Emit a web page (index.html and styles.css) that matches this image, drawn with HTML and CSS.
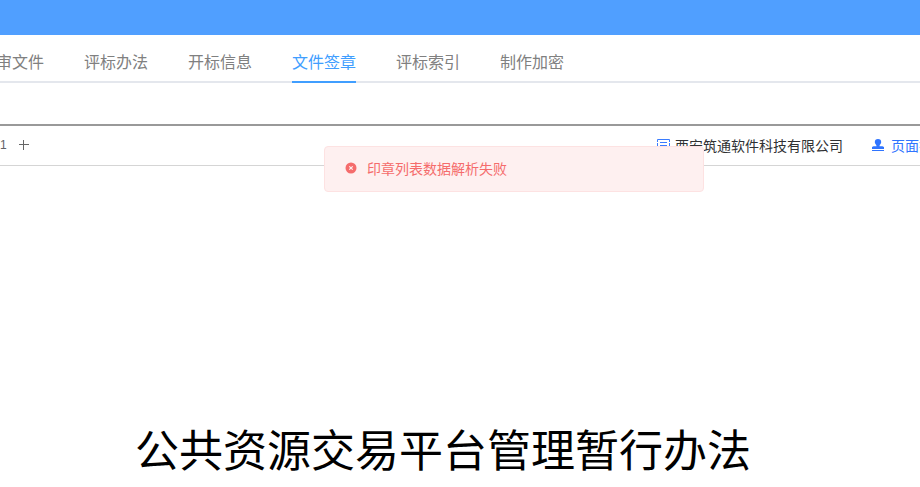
FILE: index.html
```html
<!DOCTYPE html>
<html lang="zh-CN">
<head>
<meta charset="utf-8">
<title>文件签章</title>
<link rel="stylesheet" href="styles.css">
</head>
<body>
<header class="topbar"></header>
<nav class="tabs">
  <a class="tab" href="#review">审文件</a>
  <a class="tab" href="#method">评标办法</a>
  <a class="tab" href="#opening">开标信息</a>
  <a class="tab active" href="#seal">文件签章</a>
  <a class="tab" href="#index">评标索引</a>
  <a class="tab" href="#encrypt">制作加密</a>
</nav>
<main class="viewer">
  <div class="toolbar">
    <div class="zoom">
      <span>1</span>
      <button class="plus" type="button" aria-label="放大"><svg width="12" height="12" viewBox="0 0 12 12"><path d="M1 5.5h10M5.5 1v10" stroke="#666" fill="none"/></svg></button>
    </div>
    <div class="actions">
      <span class="company">
        <svg width="14" height="14" viewBox="0 0 14 14" fill="none" stroke="#3a7cff"><path d="M1.500 4V1.500H13.500V4M1.500 11v1.500H13.500V11M1.500 5v4M13.500 5v4M4 4.500h7M4 7.500h7M4 10h4"/></svg>
        西安筑通软件科技有限公司
      </span>
      <button class="stamp" type="button">
        <svg width="14" height="14" viewBox="0 0 14 14" fill="#2f74ff"><path d="M7 1a3.200 3.200 0 0 1 3.200 3.200c0 1.500-1.700 2.200-1.700 4h3L13 9v2H1V9l1.500-.8h3c0-1.800-1.700-2.500-1.700-4A3.200 3.200 0 0 1 7 1zM1 12h12v1H1z"/></svg>
        页面操
      </button>
    </div>
  </div>
  <article class="page">
    <h1>公共资源交易平台管理暂行办法</h1>
  </article>
</main>
<div class="message" role="alert">
  <svg width="12" height="12" viewBox="0 0 12 12"><circle cx="6" cy="6" r="5.500" fill="#f56c6c"/><path d="M4.300 4.300l3.400 3.400M7.700 4.300L4.300 7.700" stroke="#fef0f0" stroke-width="1.200"/></svg>
  <p>印章列表数据解析失败</p>
</div>
</body>
</html>
```
FILE: styles.css
```css
* {
  box-sizing: border-box;
}

body {
  margin: 0;
  overflow: hidden;
  background: #fff;
  color: #303133;
  font: 400 14px/18px "Noto Sans CJK SC", sans-serif;
}

svg {
  flex: none;
}

button {
  display: flex;
  align-items: center;
  padding: 0;
  border: 0;
  background: none;
  font: inherit;
  cursor: pointer;
}

.topbar {
  height: 35px;
  background: #509fff;
}

.tabs {
  display: flex;
  gap: 40px;
  height: 48px;
  padding-top: 7px;
  border-bottom: 2px solid #e4e7ed;
}

.tab {
  flex: none;
  height: 41px;
  border-bottom: 2px solid transparent;
  color: #808080;
  font-size: 16px;
  line-height: 38px;
  text-decoration: none;
  white-space: nowrap;
}

.tab:first-child {
  margin-left: -4px;
}

.tab.active {
  border-color: #409eff;
  color: #409eff;
}

.viewer {
  margin-top: 41px;
  border-top: 2px solid #999;
}

.toolbar {
  display: flex;
  align-items: center;
  justify-content: space-between;
  height: 40px;
  padding-bottom: 1px;
  border-bottom: 1px solid #d5d5d5;
}

.zoom {
  display: flex;
  align-items: center;
  gap: 11px;
  font-family: "Liberation Sans", sans-serif;
  font-size: 12px;
  color: #606266;
}

.actions {
  display: flex;
  gap: 28px;
  margin-right: -13px;
  white-space: nowrap;
}

.company {
  display: flex;
  align-items: center;
  gap: 5px;
}

.stamp {
  gap: 6px;
  color: #2f74ff;
}

.page {
  padding-top: 250px;
  text-align: center;
}

h1 {
  margin: 0 34px 0 0;
  color: #000;
  font-size: 44px;
  font-weight: 400;
  line-height: 64px;
}

.message {
  position: absolute;
  top: 146px;
  left: calc(50% + 54px);
  display: flex;
  align-items: center;
  gap: 10px;
  width: 380px;
  padding: 12px 20px 14px;
  border: 1px solid #fde2e2;
  border-radius: 4px;
  background: #fef0f0;
  color: #f56c6c;
  transform: translateX(-50%);
}

.message p {
  margin: 0;
}
```
